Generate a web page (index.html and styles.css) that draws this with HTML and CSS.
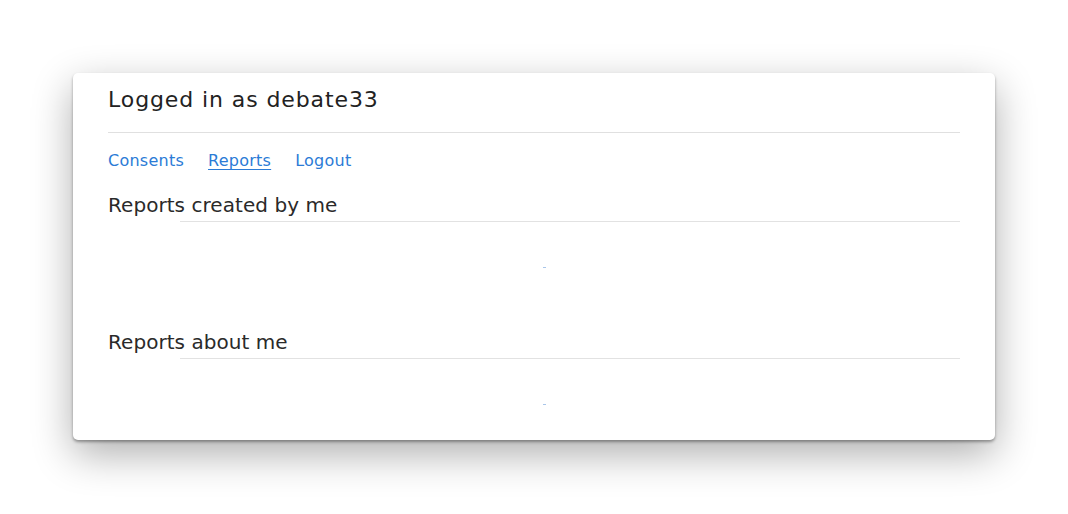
FILE: index.html
```html
<!DOCTYPE html>
<html>
<head>
<meta charset="utf-8">
<title>Reports</title>
<link rel="stylesheet" href="styles.css">
</head>
<body>
<div class="card">
  <h1 class="title">Logged in as debate33</h1>
  <div class="rule"></div>
  <nav class="nav">
    <a class="nav-link" href="#">Consents</a>
    <a class="nav-link active" href="#">Reports</a>
    <a class="nav-link" href="#">Logout</a>
  </nav>
  <section class="section">
    <h2 class="section-title">Reports created by me</h2>
    <div class="section-rule"></div>
    <div class="loading"><span class="dot"></span></div>
  </section>
  <section class="section">
    <h2 class="section-title">Reports about me</h2>
    <div class="section-rule"></div>
    <div class="loading last"><span class="dot"></span></div>
  </section>
</div>
</body>
</html>
```
FILE: styles.css
```css
html, body {
  margin: 0;
  padding: 0;
  background: #ffffff;
}
body {
  font-family: "DejaVu Sans", "Noto Sans", sans-serif;
  color: #222;
  padding-bottom: 80px;
}
.card {
  width: 922px;
  box-sizing: border-box;
  margin: 73px auto 0;
  padding: 12px 35px 0;
  background: #fff;
  border-radius: 5px;
  box-shadow: 0 2px 3px rgba(0,0,0,0.35), 0 14px 40px rgba(0,0,0,0.32);
  display: flex;
  flex-direction: column;
}
.title {
  margin: 0;
  font-weight: 400;
  font-size: 22px;
  line-height: 30px;
  color: #222;
  letter-spacing: 0.9px;
}
.rule {
  margin-top: 17px;
  height: 1px;
  background: #e0e0e0;
}
.nav {
  margin-top: 18px;
  display: flex;
  gap: 24px;
  height: 20px;
  align-items: center;
}
.nav-link {
  font-size: 16px;
  line-height: 20px;
  color: #2b7bd6;
  text-decoration: none;
  letter-spacing: 0.25px;
}
.nav-link.active {
  text-decoration: underline;
  text-underline-offset: 3px;
}
.section {
  display: flex;
  flex-direction: column;
}
.nav + .section {
  margin-top: 22px;
}
.section-title {
  margin: 0;
  font-weight: 400;
  font-size: 20px;
  line-height: 24px;
  color: #2a2a2a;
  letter-spacing: 0.05px;
}
.section-rule {
  margin-top: 4px;
  margin-left: 72px;
  height: 1px;
  background: #e2e2e2;
}
.loading {
  height: 108px;
  box-sizing: border-box;
  padding-top: 45px;
  display: flex;
  justify-content: center;
}
.loading.last {
  height: 81px;
}
.dot {
  width: 3px;
  height: 1px;
  background: #a9c6ea;
  margin-left: 20px;
}
```
